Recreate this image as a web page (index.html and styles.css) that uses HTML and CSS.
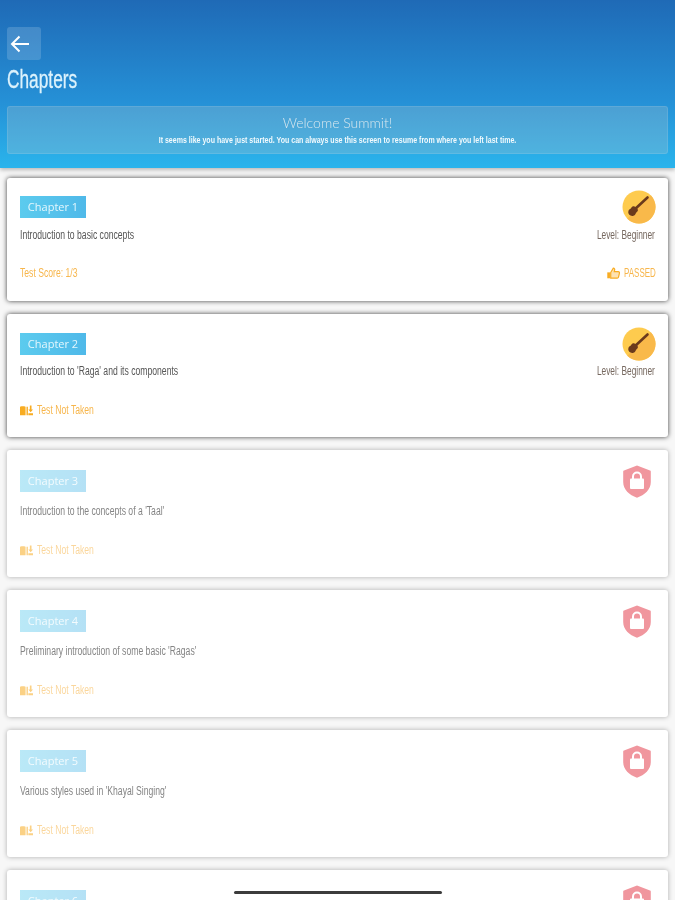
FILE: index.html
```html
<!DOCTYPE html>
<html lang="en">
<head>
<meta charset="utf-8">
<title>Chapters</title>
<link rel="stylesheet" href="styles.css">
</head>
<body>
<svg class="defs" width="0" height="0" aria-hidden="true">
  <defs>
    <symbol id="badge" viewBox="0 0 34 34">
      <circle cx="17" cy="17" r="16.500" fill="#fecb4e"/>
      <path d="M28.700 5.300A16.500 16.500 0 0 1 5.300 28.700z" fill="#f9b94a"/>
      <path d="M25.500 7.500 12 20" stroke="#6b3a1c" stroke-width="2.600" stroke-linecap="round"/>
      <path d="M10.500 16.500c1.200-.5 2-.2 3 .4 1.200.7 2.200 1.800 2.400 3 .1.900-.5 1.500-1.100 2-.7.500-.9 1.500-1.600 2.500-1 1.400-3 1.900-4.700 1.100-1.900-.9-2.700-3-2-4.800.4-1.100 1.300-1.600 2-2 .8-.5 1.100-1.700 2-2.200z" fill="#6b3a1c"/>
    </symbol>
    <symbol id="shield" viewBox="0 0 28 33">
      <path d="M14 .5 27 5.500c.5 0 .8.400.8 1V17c0 7.500-6 13-13.800 15.800C6.200 30 .2 24.500.2 17V6.500c0-.6.300-1 .8-1z" fill="#f0969e"/>
      <path d="M10 15v-3.500a4 4 0 0 1 8 0V15" fill="none" stroke="#fff" stroke-width="2"/>
      <rect x="7" y="13.500" width="14" height="10.500" rx="1" fill="#fff"/>
    </symbol>
    <symbol id="book" viewBox="0 0 14 11">
      <path d="M0 1.500c2-.6 4-.6 6 0V10.500H0zM7 1.500h1.500V10.500H7z" fill="currentColor"/>
      <path d="M10.600 0h1.800v4.500H14L11.500 7.500 9 4.500h1.600zM9 8.500h5v2H9z" fill="currentColor"/>
    </symbol>
    <symbol id="thumb" viewBox="0 0 14 12">
      <path d="M.3 5.300h2.900V11.700H.3z" fill="currentColor"/>
      <path d="M4 5.500 6.800.8c1.200 0 1.700.9 1.400 2L7.800 4.500h4.300c1 0 1.500.8 1.300 1.600l-1 4.300c-.2.700-.7 1.100-1.400 1.100H4z" fill="currentColor" fill-opacity=".35" stroke="currentColor" stroke-width="1.300"/>
    </symbol>
  </defs>
</svg>

<header class="top">
  <button class="back" type="button" aria-label="Back">
    <svg width="20" height="18" viewBox="0 0 20 18"><path d="M19 9H2M9.500 1.500 2 9l7.500 7.500" fill="none" stroke="#fff" stroke-width="2"/></svg>
  </button>
  <h1 class="title">Chapters</h1>
  <div class="welcome">
    <p class="welcome-head">Welcome Summit!</p>
    <p class="welcome-sub">It seems like you have just started. You can always use this screen to resume from where you left last time.</p>
  </div>
</header>

<main class="list">
  <article class="card open first">
    <div class="row">
      <span class="tag">Chapter 1</span>
      <svg class="badge"><use href="#badge"/></svg>
    </div>
    <div class="row desc-row">
      <p class="desc">Introduction to basic concepts</p>
      <span class="level">Level: Beginner</span>
    </div>
    <div class="row foot">
      <span class="score"><span class="narrow">Test Score: 1/3</span></span>
      <span class="score"><svg class="mini thumb"><use href="#thumb"/></svg><span class="narrow passed">PASSED</span></span>
    </div>
  </article>

  <article class="card open">
    <div class="row">
      <span class="tag">Chapter 2</span>
      <svg class="badge"><use href="#badge"/></svg>
    </div>
    <div class="row desc-row">
      <p class="desc">Introduction to 'Raga' and its components</p>
      <span class="level">Level: Beginner</span>
    </div>
    <div class="row foot">
      <span class="score"><svg class="mini"><use href="#book"/></svg><span class="narrow">Test Not Taken</span></span>
    </div>
  </article>

  <article class="card locked">
    <div class="row">
      <span class="tag">Chapter 3</span>
      <svg class="shield"><use href="#shield"/></svg>
    </div>
    <div class="row desc-row"><p class="desc">Introduction to the concepts of a 'Taal'</p></div>
    <div class="row foot"><span class="score"><svg class="mini"><use href="#book"/></svg><span class="narrow">Test Not Taken</span></span></div>
  </article>

  <article class="card locked">
    <div class="row">
      <span class="tag">Chapter 4</span>
      <svg class="shield"><use href="#shield"/></svg>
    </div>
    <div class="row desc-row"><p class="desc">Preliminary introduction of some basic 'Ragas'</p></div>
    <div class="row foot"><span class="score"><svg class="mini"><use href="#book"/></svg><span class="narrow">Test Not Taken</span></span></div>
  </article>

  <article class="card locked">
    <div class="row">
      <span class="tag">Chapter 5</span>
      <svg class="shield"><use href="#shield"/></svg>
    </div>
    <div class="row desc-row"><p class="desc">Various styles used in 'Khayal Singing'</p></div>
    <div class="row foot"><span class="score"><svg class="mini"><use href="#book"/></svg><span class="narrow">Test Not Taken</span></span></div>
  </article>

  <article class="card locked">
    <div class="row">
      <span class="tag">Chapter 6</span>
      <svg class="shield"><use href="#shield"/></svg>
    </div>
  </article>
</main>

<div class="home-bar"></div>
</body>
</html>
```

FILE: styles.css
```css
* { box-sizing: border-box; }

html, body {
  margin: 0;
  height: 900px;
  overflow: hidden;
  background: #f7f7f7;
}

body {
  position: relative;
  font-family: "Liberation Sans", sans-serif;
  filter: blur(.4px);
}

.defs { position: absolute; }

p, h1 { margin: 0; }

.top {
  height: 168px;
  padding: 27px 7px 0;
  background: linear-gradient(180deg, #1f6ab6 0%, #2590d6 60%, #2ab4ec 100%);
  box-shadow: 0 2px 4px rgba(0, 0, 0, .25);
}

.back {
  display: flex;
  align-items: center;
  justify-content: flex-start;
  width: 34px;
  height: 33px;
  padding: 0 0 0 3px;
  border: 0;
  border-radius: 3px;
  background: rgba(255, 255, 255, .16);
}

.title {
  margin-top: 2px;
  height: 34px;
  width: max-content;
  font-size: 26px;
  line-height: 34px;
  font-weight: 400;
  color: #dcf2fc;
  transform: scaleX(.665);
  transform-origin: left center;
  -webkit-text-stroke: .3px #dcf2fc;
}

.welcome {
  height: 48px;
  margin-top: 10px;
  padding-top: 7px;
  text-align: center;
  border: 1px solid rgba(255, 255, 255, .1);
  border-radius: 3px;
  background: rgba(190, 200, 200, .25);
}

.welcome-head {
  font-family: Lato, sans-serif;
  font-weight: 300;
  font-size: 14px;
  line-height: 17px;
  color: #d9e8ef;
}

.welcome-sub {
  margin-top: 3px;
  font-size: 9.500px;
  line-height: 12px;
  font-weight: 700;
  color: #f2fafd;
  white-space: nowrap;
  transform: scaleX(.74);
}

.list {
  display: flex;
  flex-direction: column;
  gap: 13px;
  padding: 10px 7px 0;
}

.card {
  flex: none;
  height: 127px;
  padding: 20px 13px 0;
  border-radius: 3px;
  background: #fff;
  box-shadow: 0 0 5px rgba(0, 0, 0, .3);
}

.card.open {
  height: 123px;
  padding-top: 19px;
  box-shadow: 0 0 5px rgba(0, 0, 0, .75);
}

.card.first { padding-top: 18px; }

.row {
  display: flex;
  align-items: center;
  justify-content: space-between;
}

.tag {
  width: 66px;
  height: 22px;
  font-family: "Open Sans", sans-serif;
  font-size: 11px;
  line-height: 22px;
  text-align: center;
  color: #e4f7fd;
  background: linear-gradient(90deg, #5ccbee, #4fb9e9);
}

.badge {
  width: 34px;
  height: 34px;
  margin: -6px -1px -6px 0;
}

.shield {
  width: 28px;
  height: 33px;
  margin: -6px 4px -6px 0;
}

.desc-row { margin-top: 9px; height: 14px; }
.first .desc-row { margin-top: 10px; }
.locked .desc-row { margin-top: 12px; }

.desc, .level {
  font-size: 12.500px;
  line-height: 14px;
  color: #555;
  white-space: nowrap;
  transform: scaleX(.69);
  transform-origin: left center;
}

.level {
  color: #75675e;
  transform: scaleX(.667);
  transform-origin: right center;
}

.foot { margin-top: 25px; height: 14px; }
.first .foot { margin-top: 24px; }

.score {
  display: inline-flex;
  align-items: center;
  gap: 4px;
  font-size: 12.500px;
  line-height: 14px;
  color: #f7b64c;
}

.narrow {
  display: inline-block;
  white-space: nowrap;
  transform: scaleX(.69);
  transform-origin: left center;
}

.passed {
  width: 31px;
  transform: scaleX(.64);
}

.mini { width: 13px; height: 11px; color: #f8ac22; }
.thumb { height: 12px; }

.locked .tag { opacity: .42; }
.locked .desc { color: #858585; }
.locked .score { opacity: .55; }

.home-bar {
  position: absolute;
  left: 234px;
  top: 891px;
  width: 208px;
  height: 3px;
  border-radius: 2px;
  background: #3c3c3c;
}
```
